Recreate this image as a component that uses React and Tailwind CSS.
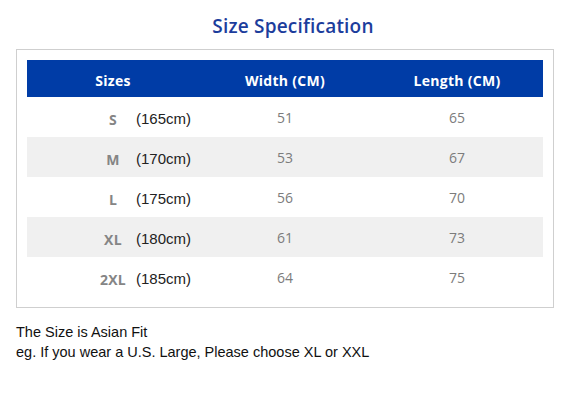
import React from 'react';

const rows = [
  { size: 'S', height: '165cm', width: 51, length: 65 },
  { size: 'M', height: '170cm', width: 53, length: 67 },
  { size: 'L', height: '175cm', width: 56, length: 70 },
  { size: 'XL', height: '180cm', width: 61, length: 73 },
  { size: '2XL', height: '185cm', width: 64, length: 75 },
];

function App() {
  return (
    <div className="w-[568px] h-[420px] bg-white font-['Liberation_Sans',Arial,sans-serif]">
      {/* タイトル */}
      <div className="h-[49px] flex items-center justify-center pl-[18px] pt-[4px]">
        <h1 className="text-[19px] font-semibold text-[#1c3d9c] font-['Open_Sans',sans-serif] tracking-[0.2px]">
          Size Specification
        </h1>
      </div>

      {/* 表 */}
      <div className="ml-[16px] w-[538px] border border-[#cfcfcf] p-[10px]">
        <div className="h-[37px] bg-[#003ca6] grid grid-cols-3 items-center text-white font-bold text-[14px] tracking-[0.3px] font-['Open_Sans',sans-serif] pt-[4px]">
          <div className="text-center">Sizes</div>
          <div className="text-center">Width (CM)</div>
          <div className="text-center">Length (CM)</div>
        </div>
        {rows.map((row, i) => (
          <div
            key={row.size}
            className={`h-[40px] grid grid-cols-3 items-center ${i % 2 === 1 ? 'bg-[#f0f0f0]' : 'bg-white'}`}
          >
            <div className="flex items-center pl-[66px] pt-[5px]">
              <span className="w-[40px] text-center text-[14px] font-bold text-[#858585] font-['Open_Sans',sans-serif] tracking-[0.3px]">
                {row.size}
              </span>
              <span className="ml-[3px] text-[15px] text-[#222222]">({row.height})</span>
            </div>
            <div className="text-center text-[14px] text-[#7c7c7c] font-['Open_Sans',sans-serif] pt-[1px]">{row.width}</div>
            <div className="text-center text-[14px] text-[#7c7c7c] font-['Open_Sans',sans-serif] pt-[1px]">{row.length}</div>
          </div>
        ))}
      </div>

      {/* 注意書き */}
      <div className="mt-[14px] pl-[16px] text-[14.5px] leading-[20px] text-[#111111]">
        <p>The Size is Asian Fit</p>
        <p>eg. If you wear a U.S. Large, Please choose XL or XXL</p>
      </div>
    </div>
  );
}

export default App;
